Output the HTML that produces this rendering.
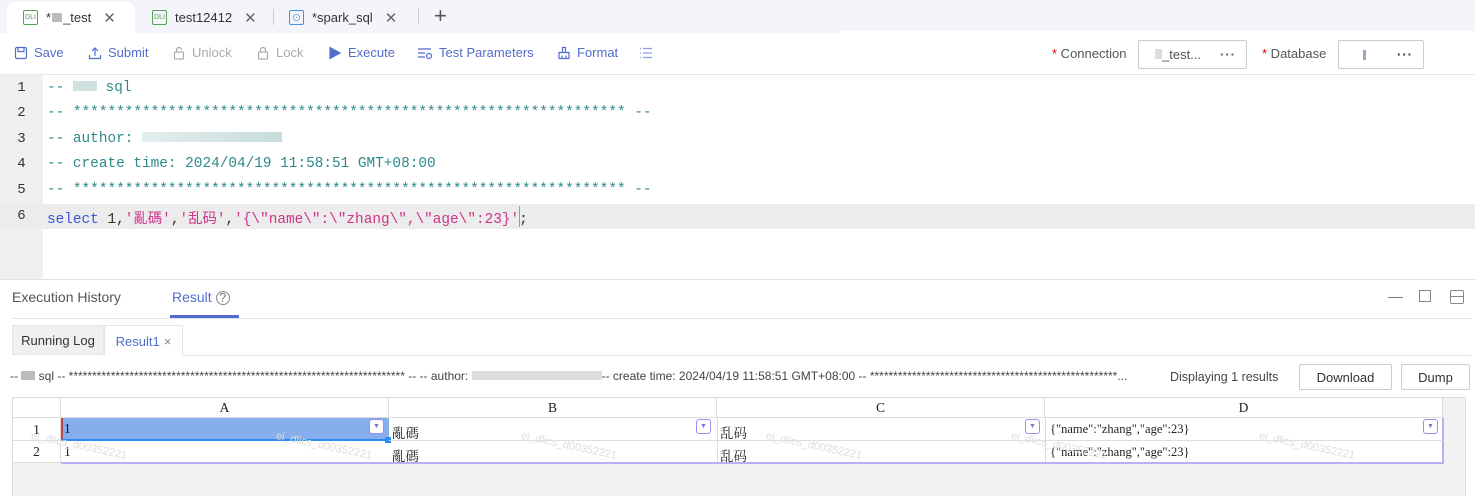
<!DOCTYPE html>
<html><head><meta charset="utf-8"><style>
*{box-sizing:border-box;margin:0;padding:0}
body{width:1475px;height:496px;overflow:hidden;background:#fff;font-family:"Liberation Sans","Noto Sans CJK SC",sans-serif;position:relative;color:#333}
.a{position:absolute}
.tabs{left:0;top:0;width:1475px;height:33px;background:#f3f5fa}
.tab{top:2px;height:31px;font-size:13px;color:#333;display:flex;align-items:center}
.ic{width:15px;height:15px;border:1px solid #5a9e5a;font-size:7px;color:#5a9e5a;display:inline-flex;align-items:center;justify-content:center;margin-right:8px;border-radius:2px}
.x{color:#666;margin-left:12px;font-size:15px}
.tb{top:44px;height:17px;font-size:13px;color:#526ecc;display:flex;align-items:center;gap:6px}
.tb svg{width:14px;height:14px;fill:none;stroke:currentColor;stroke-width:1.2}
.dis{color:#aaa}
.code{font-family:"Liberation Mono","Noto Sans CJK SC",monospace;font-size:14.4px;color:#2e8a8a;left:47px;white-space:pre}
.ln{left:0;width:43px;text-align:center;font-family:"Liberation Mono",monospace;font-size:14px;color:#333}
.g{font-family:"Liberation Serif","Noto Serif CJK SC",serif;font-size:13.5px;color:#222}
.cell{border-right:1px solid #ddd;border-bottom:1px solid #ddd}
.dd{width:15px;height:15px;border:1.5px solid #9a8ef0;border-radius:3px;background:#fff;font-size:7px;color:#8070e0;display:flex;align-items:center;justify-content:center}
.wm{font-size:11px;color:#ddd;transform:rotate(12deg);font-family:"Liberation Sans",sans-serif}
.btn{border:1px solid #ccc;border-radius:2px;font-size:13px;color:#333;display:flex;align-items:center;justify-content:center;background:#fff}
</style></head><body>
<div class="a tabs"></div>
<div class="a" style="left:7px;top:2px;width:128px;height:31px;background:#fff;border-radius:8px 8px 0 0"></div>
<div class="a tab" style="left:23px"><span class="ic">DLI</span>* <span style="display:inline-block;width:10px;height:9px;background:#bbb;margin:0 1px"></span>_test<span class="x">✕</span></div>
<div class="a tab" style="left:152px"><span class="ic">DLI</span>test12412<span class="x">✕</span></div>
<div class="a" style="left:273px;top:9px;width:1px;height:16px;background:#ccc"></div>
<div class="a tab" style="left:289px"><span class="ic" style="border-color:#4a8fe8;color:#4a8fe8;font-size:9px">⊙</span>*spark_sql<span class="x">✕</span></div>
<div class="a" style="left:418px;top:9px;width:1px;height:16px;background:#ccc"></div>
<div class="a" style="left:434px;top:3px;font-size:22px;color:#555;font-weight:300">+</div>
<div class="a" style="left:838px;top:31px;width:637px;height:2px;background:#fff"></div>

<div class="a tb" style="left:14px"><svg viewBox="0 0 14 14"><rect x="1.5" y="1.5" width="11" height="11" rx="1.5"/><path d="M4 1.5v4h6v-4"/></svg>Save</div>
<div class="a tb" style="left:88px"><svg viewBox="0 0 14 14"><path d="M7 10V2M4 5l3-3 3 3M1.5 9v3.5h11V9"/></svg>Submit</div>
<div class="a tb dis" style="left:172px"><svg viewBox="0 0 14 14"><rect x="2.5" y="6" width="9" height="7" rx="1"/><path d="M4.5 6V4a2.5 2.5 0 0 1 5 0"/></svg>Unlock</div>
<div class="a tb dis" style="left:256px"><svg viewBox="0 0 14 14"><rect x="2.5" y="6" width="9" height="7" rx="1"/><path d="M4.5 6V4a2.5 2.5 0 0 1 5 0V6"/></svg>Lock</div>
<div class="a tb" style="left:328px"><svg viewBox="0 0 14 14"><path d="M2 1.5l10 5.5-10 5.5z" fill="#526ecc"/></svg>Execute</div>
<div class="a tb" style="left:417px"><svg viewBox="0 0 16 14" style="width:16px"><path d="M1 3h13M1 7h7M1 11h7"/><circle cx="12" cy="10" r="2.5"/></svg>Test Parameters</div>
<div class="a tb" style="left:557px"><svg viewBox="0 0 14 14"><path d="M5.5 1.5h3v5h-3zM2 6.5h10v6H2zM5 9.5v3M9 9.5v3"/></svg>Format</div>
<div class="a tb" style="left:639px;color:#8a9de0"><svg viewBox="0 0 14 14"><path d="M1 2.5h1M4 2.5h9M1 7h1M4 7h9M1 11.5h1M4 11.5h9"/></svg></div>
<div class="a" style="left:1052px;top:46px;font-size:13px;color:#555"><span style="color:#e00">*</span> Connection</div>
<div class="a btn" style="left:1138px;top:40px;width:109px;height:29px;justify-content:space-between;padding:0 10px 0 16px;color:#555"><span><span style="display:inline-block;width:7px;height:10px;background:#ddd"></span>_test...</span><b style="letter-spacing:1px">···</b></div>
<div class="a" style="left:1262px;top:46px;font-size:13px;color:#555"><span style="color:#e00">*</span> Database</div>
<div class="a btn" style="left:1338px;top:40px;width:86px;height:29px;justify-content:space-between;padding:0 10px 0 24px"><span style="display:inline-block;width:3px;height:10px;background:#a8a0c0"></span><b style="letter-spacing:1px">···</b></div>
<div class="a" style="left:0;top:74px;width:1475px;height:1px;background:#e8e8e8"></div>

<div class="a" style="left:0;top:75px;width:43px;height:204px;background:#f0f0f0"></div>
<div class="a" style="left:0;top:204px;width:1475px;height:25px;background:#ececec"></div>
<div class="a ln" style="top:80px">1</div><div class="a ln" style="top:105px">2</div><div class="a ln" style="top:131px">3</div><div class="a ln" style="top:156px">4</div><div class="a ln" style="top:182px">5</div><div class="a ln" style="top:208px">6</div>
<div class="a code" style="top:80px">-- <span style="display:inline-block;width:24px;height:10px;background:#cfe0e0"></span> sql</div>
<div class="a code" style="top:105px">-- **************************************************************** --</div>
<div class="a code" style="top:131px">-- author: <span style="display:inline-block;width:140px;height:10px;background:linear-gradient(90deg,#e4eeee,#c8dcdc)"></span></div>
<div class="a code" style="top:156px">-- create time: 2024/04/19 11:58:51 GMT+08:00</div>
<div class="a code" style="top:182px">-- **************************************************************** --</div>
<div class="a code" style="top:207px;color:#333"><span style="color:#3a55d8">select</span> 1,<span style="color:#d0338a">'亂碼'</span>,<span style="color:#d0338a">'乱码'</span>,<span style="color:#d0338a">'{\"name\":\"zhang\",\"age\":23}'</span>;</div>
<div class="a" style="left:519px;top:206px;width:1px;height:21px;background:#999"></div>
<div class="a" style="left:0;top:279px;width:1475px;height:1px;background:#e0e0e0"></div>

<div class="a" style="left:12px;top:289px;font-size:14px;color:#555">Execution History</div>
<div class="a" style="left:172px;top:289px;font-size:14px;color:#526ecc">Result <span style="font-size:13px;border:1px solid #888;border-radius:50%;display:inline-block;width:14px;height:14px;line-height:12px;text-align:center;color:#777">?</span></div>
<div class="a" style="left:12px;top:318px;width:1459px;height:1px;background:#e0e0ec"></div>
<div class="a" style="left:170px;top:315px;width:69px;height:3px;background:#526ecc"></div>
<div class="a" style="left:1388px;top:297px;width:15px;height:1px;background:#777"></div>
<div class="a" style="left:1419px;top:290px;width:12px;height:12px;border:1px solid #888"></div>
<div class="a" style="left:1450px;top:290px;width:14px;height:14px;border:1px solid #888;border-radius:2px"></div>
<div class="a" style="left:1450px;top:296px;width:14px;height:1px;background:#888"></div>

<div class="a" style="left:12px;top:325px;width:92px;height:30px;background:#f0f0f0;border:1px solid #e4e4e4;font-size:13px;color:#333;display:flex;align-items:center;justify-content:center">Running Log</div>
<div class="a" style="left:104px;top:325px;width:79px;height:31px;background:#fff;border:1px solid #e4e4e4;border-bottom:none;font-size:13px;color:#526ecc;display:flex;align-items:center;justify-content:center">Result1 <span style="color:#888;margin-left:4px">×</span></div>
<div class="a" style="left:183px;top:355px;width:1288px;height:1px;background:#e4e4e4"></div>

<div class="a" style="left:10px;top:369px;font-size:12px;color:#444;white-space:nowrap;width:1140px;overflow:hidden">-- <span style="display:inline-block;width:14px;height:9px;background:#bbb"></span> sql -- ************************************************************************ -- -- author: <span style="display:inline-block;width:130px;height:9px;background:#ddd"></span>-- create time: 2024/04/19 11:58:51 GMT+08:00 -- *****************************************************...</div>
<div class="a" style="left:1170px;top:370px;font-size:12.5px;color:#444">Displaying 1 results</div>
<div class="a btn" style="left:1299px;top:364px;width:93px;height:26px">Download</div>
<div class="a btn" style="left:1401px;top:364px;width:69px;height:26px">Dump</div>

<div class="a" style="left:12px;top:397px;width:1453px;height:99px;background:#f2f2f2;border-top:1px solid #ddd;border-left:1px solid #ddd"></div>
<div class="a" style="left:1465px;top:397px;width:1px;height:99px;background:#ddd"></div>
<div class="a" style="left:13px;top:398px;width:1430px;height:65px;background:#fff"></div>
<div class="a g cell" style="left:13px;top:398px;width:48px;height:20px"></div>
<div class="a g cell" style="left:61px;top:398px;width:328px;height:20px;text-align:center;line-height:20px">A</div>
<div class="a g cell" style="left:389px;top:398px;width:328px;height:20px;text-align:center;line-height:20px">B</div>
<div class="a g cell" style="left:717px;top:398px;width:328px;height:20px;text-align:center;line-height:20px">C</div>
<div class="a g cell" style="left:1045px;top:398px;width:398px;height:20px;text-align:center;line-height:20px">D</div>
<div class="a g cell" style="left:13px;top:418px;width:48px;height:23px;text-align:center;line-height:23px">1</div>
<div class="a g cell" style="left:13px;top:441px;width:48px;height:22px;text-align:center;line-height:22px">2</div>
<div class="a" style="left:61px;top:418px;width:328px;height:22px;background:#86aeec;border-left:2px solid #b44"></div>
<div class="a" style="left:61px;top:439px;width:328px;height:2px;background:#2a8cf0"></div>
<div class="a" style="left:385px;top:437px;width:6px;height:6px;background:#2a8cf0"></div>
<div class="a" style="left:61px;top:462px;width:1382px;height:2px;background:#b8b0f4"></div>
<div class="a" style="left:1442px;top:418px;width:2px;height:46px;background:#b8b0f4"></div>
<div class="a" style="left:389px;top:440px;width:1054px;height:1px;background:#ddd"></div>
<div class="a" style="left:717px;top:418px;width:1px;height:44px;background:#ddd"></div>
<div class="a" style="left:1045px;top:418px;width:1px;height:44px;background:#ddd"></div>
<div class="a g" style="left:64px;top:421px">1</div><div class="a g" style="left:64px;top:444px">1</div>
<div class="a g" style="left:392px;top:422px">亂碼</div><div class="a g" style="left:392px;top:445px">亂碼</div>
<div class="a g" style="left:720px;top:422px">乱码</div><div class="a g" style="left:720px;top:445px">乱码</div>
<div class="a g" style="left:1050px;top:422px;font-size:12.5px">{"name":"zhang","age":23}</div><div class="a g" style="left:1050px;top:445px;font-size:12.5px">{"name":"zhang","age":23}</div>
<div class="a dd" style="left:369px;top:419px">▼</div>
<div class="a dd" style="left:696px;top:419px">▼</div>
<div class="a dd" style="left:1025px;top:419px">▼</div>
<div class="a dd" style="left:1423px;top:419px">▼</div>
<div class="a wm" style="left:30px;top:440px">ei_dlics_d00352221</div>
<div class="a wm" style="left:275px;top:440px">ei_dlics_d00352221</div>
<div class="a wm" style="left:520px;top:440px">ei_dlics_d00352221</div>
<div class="a wm" style="left:765px;top:440px">ei_dlics_d00352221</div>
<div class="a wm" style="left:1010px;top:440px">ei_dlics_d00352221</div>
<div class="a wm" style="left:1258px;top:440px">ei_dlics_d00352221</div>
</body></html>
